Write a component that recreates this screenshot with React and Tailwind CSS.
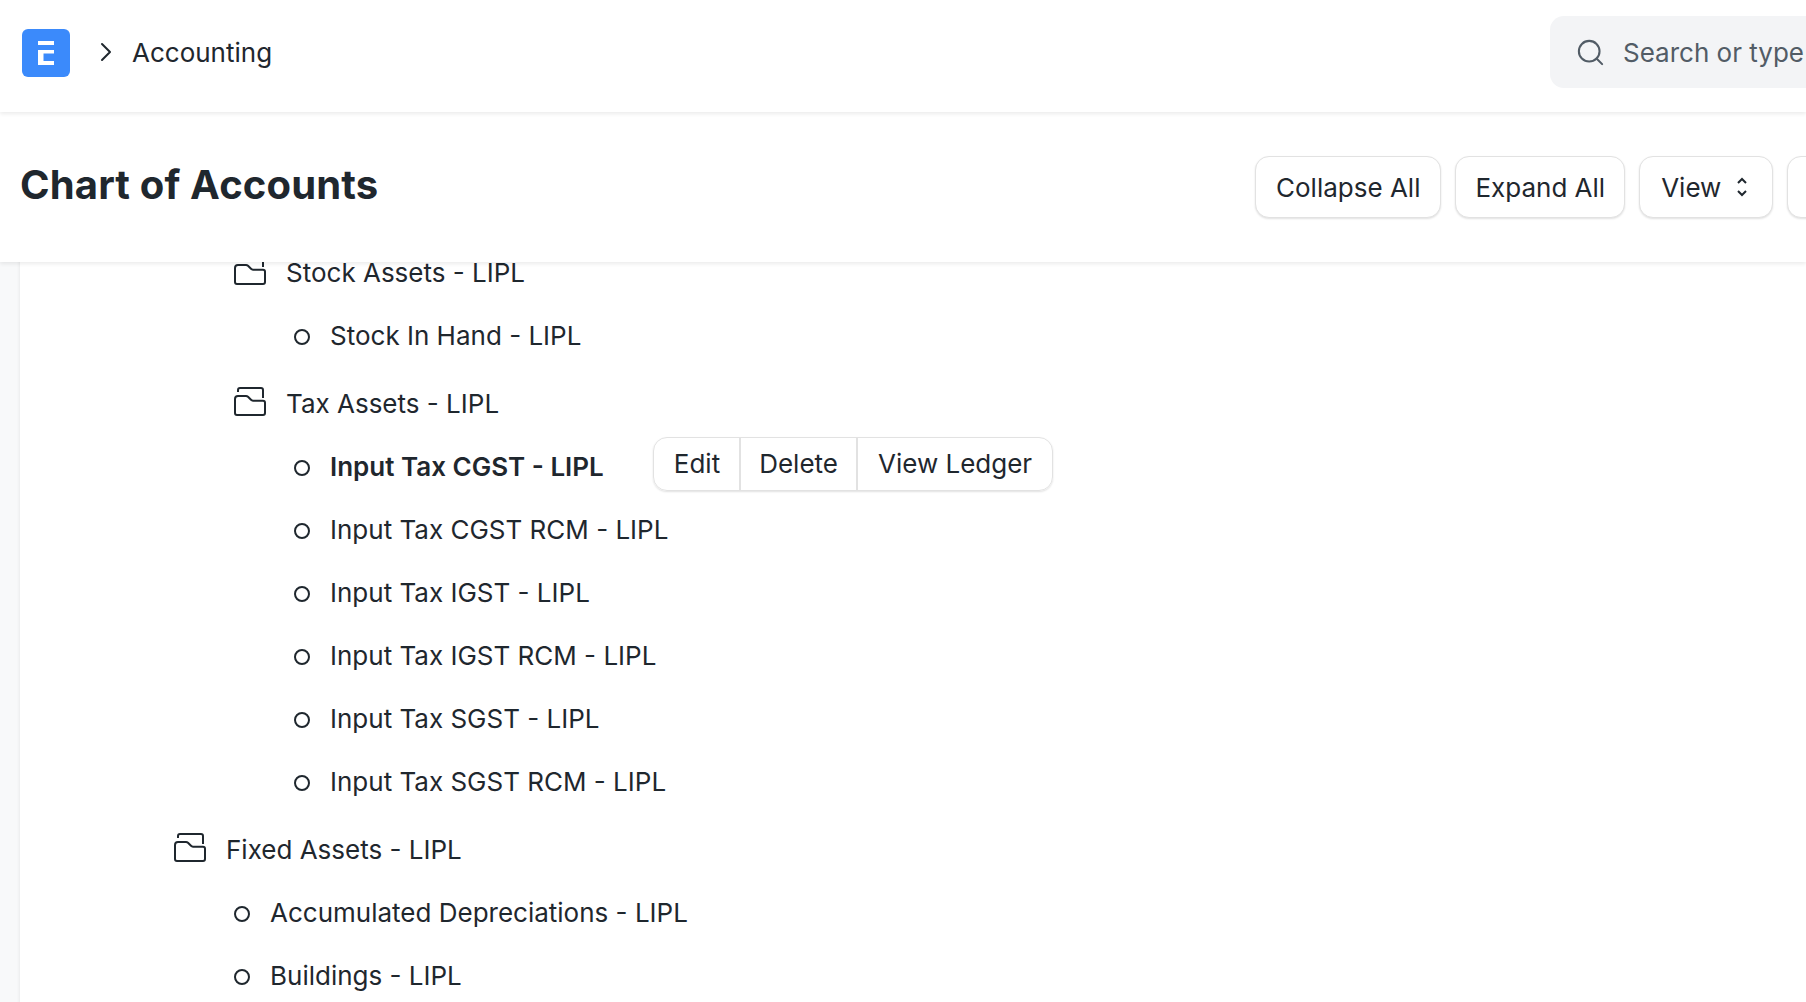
import React from 'react';
import { ChevronRight, Search } from 'lucide-react';

const Folder = () => (
  <svg width="32" height="30" viewBox="0 0 32 30" fill="none" stroke="#1f272e" strokeWidth="2" className="shrink-0 -mt-[3px]">
    <path d="M4 5V3a2 2 0 0 1 2-2h21a2 2 0 0 1 2 2v8" />
    <path d="M1 12a3 3 0 0 1 3-3h8a3 3 0 0 1 2 .8l3 3a3 3 0 0 0 2 .9h10a2 2 0 0 1 2 2V26a2 2 0 0 1-2 2H3a2 2 0 0 1-2-2V12z" strokeLinejoin="round" />
  </svg>
);

const Leaf = ({ label, bold }) => (
  <div className="flex items-center h-[63px] gap-[20px]">
    <span className="w-4 h-4 mt-[2px] rounded-full border-2 border-[#1f272e] shrink-0" />
    <span className={bold ? 'font-semibold' : ''}>{label}</span>
    {bold && (
      <div className="ml-[29px] -mt-[6px] flex h-[54px] items-stretch rounded-[14px] border border-[#e2e2e2] shadow-[0_1px_2px_rgba(0,0,0,0.12)] font-normal">
        <button className="pl-[20px] pr-[19px]">Edit</button>
        <button className="px-[18px] border-l-2 border-[#e2e2e2]">Delete</button>
        <button className="px-[20px] border-l-2 border-[#e2e2e2]">View Ledger</button>
      </div>
    )}
  </div>
);

const Group = ({ label, leaves }) => (
  <div className="mb-[5px]">
    <div className="flex items-center h-[63px] gap-[20px]">
      <Folder />
      <span>{label}</span>
    </div>
    <div className="pl-[60px]">
      {leaves.map((l) => (
        <Leaf key={l} label={l} bold={l === 'Input Tax CGST - LIPL'} />
      ))}
    </div>
  </div>
);

const HeaderButton = ({ children, className = 'px-[20px]' }) => (
  <button className={`h-[62px] shrink-0 flex items-center rounded-[14px] border border-[#e2e2e2] bg-white shadow-[0_1px_2px_rgba(0,0,0,0.12)] ${className}`}>
    {children}
  </button>
);

export default function App() {
  return (
    <div className="h-screen overflow-hidden flex flex-col bg-[#f8f9fa] text-[26px] text-[#1f272e] font-['Inter',sans-serif]">
      <nav className="relative z-20 h-[112px] shrink-0 flex items-center overflow-hidden bg-white pb-[8px] shadow-[0_2px_4px_rgba(0,0,0,0.08)]">
        <div className="w-[1550px] shrink-0 flex items-center pl-[22px]">
          <div className="w-12 h-12 mt-[2px] rounded-[6px] bg-[#3b8afb] flex items-center justify-center">
            <svg width="16" height="24" viewBox="0 0 16 24" fill="#fff">
              <path d="M0 0h16v4H0zM0 9h16v3.5H5.5V20H16v4H0z" />
            </svg>
          </div>
          <ChevronRight size={32} strokeWidth={1.5} className="ml-[20px]" />
          <span className="ml-[10px]">Accounting</span>
        </div>
        <div className="w-[640px] h-[72px] shrink-0 flex items-center rounded-[14px] bg-[#f3f4f6] pl-[25px] text-[#525c66]">
          <Search size={31} strokeWidth={1.6} />
          <span className="ml-[17px] whitespace-nowrap">Search or type</span>
        </div>
      </nav>
      <header className="relative z-10 h-[150px] shrink-0 flex items-center overflow-hidden bg-white shadow-[0_2px_4px_rgba(0,0,0,0.08)]">
        <h1 className="w-[1255px] shrink-0 pl-[20px] text-[40px] leading-none font-bold tracking-[0.14px] pb-[4px]">Chart of Accounts</h1>
        <div className="flex items-center gap-[14px]">
          <HeaderButton>Collapse All</HeaderButton>
          <HeaderButton className="px-[19px]">Expand All</HeaderButton>
          <HeaderButton className="pl-[21px] pr-[24px]">
            View
            <svg width="12" height="20" viewBox="0 0 12 20" fill="none" stroke="#1f272e" strokeWidth="2" className="ml-[15px]">
              <path d="M2 6l4-4 4 4M2 14l4 4 4-4" />
            </svg>
          </HeaderButton>
          <HeaderButton className="w-[160px]" />
        </div>
      </header>
      <main className="flex-1 ml-[20px] -mt-[21px] bg-white pl-[154px] shadow-[-1px_0_3px_rgba(0,0,0,0.06)]">
        <div className="pl-[60px]">
          <Group label="Stock Assets - LIPL" leaves={['Stock In Hand - LIPL']} />
          <Group
            label="Tax Assets - LIPL"
            leaves={[
              'Input Tax CGST - LIPL',
              'Input Tax CGST RCM - LIPL',
              'Input Tax IGST - LIPL',
              'Input Tax IGST RCM - LIPL',
              'Input Tax SGST - LIPL',
              'Input Tax SGST RCM - LIPL',
            ]}
          />
        </div>
        <Group label="Fixed Assets - LIPL" leaves={['Accumulated Depreciations - LIPL', 'Buildings - LIPL']} />
      </main>
    </div>
  );
}
